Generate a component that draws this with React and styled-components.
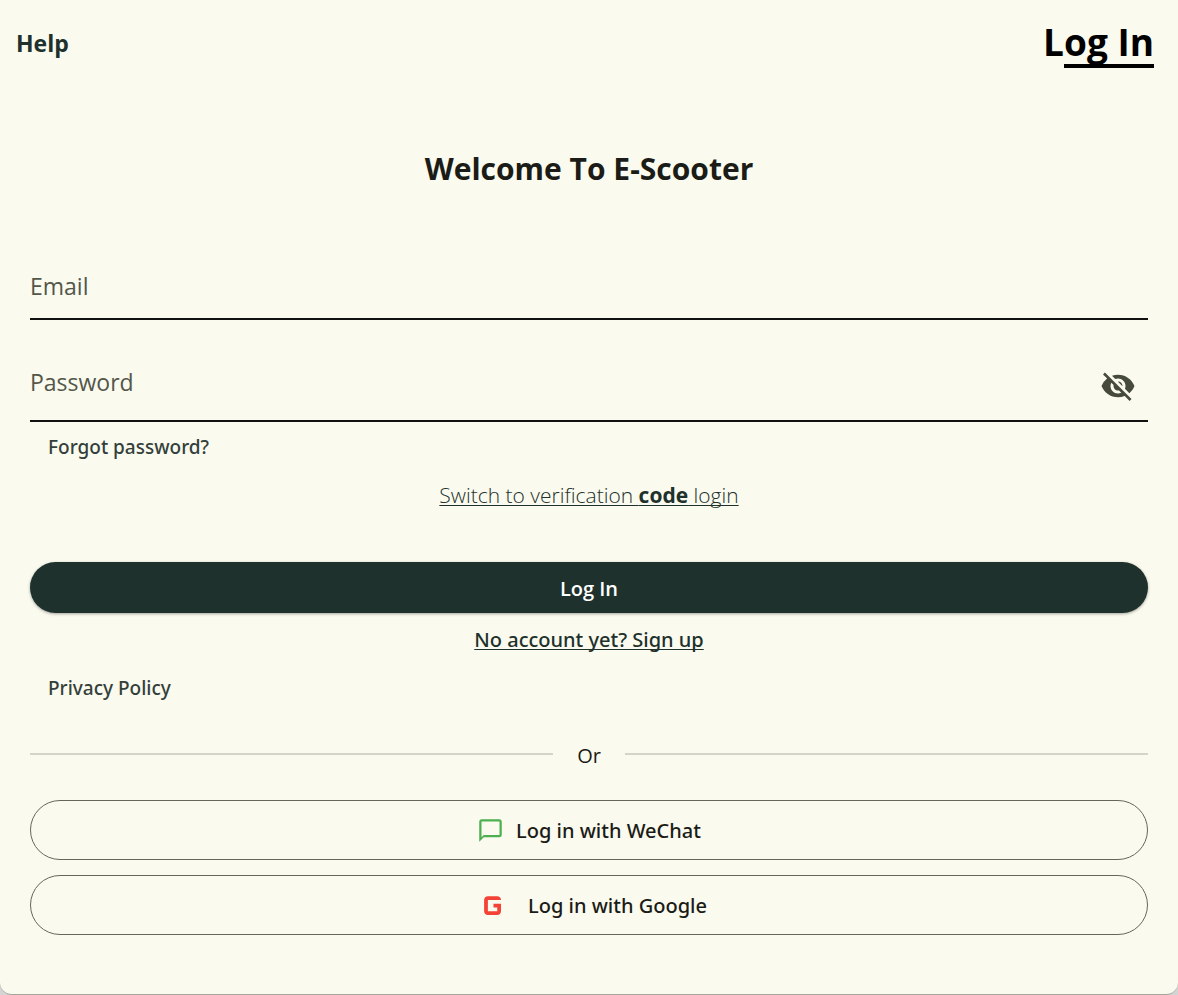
import React, { useState } from "react";
import styled, { createGlobalStyle } from "styled-components";
import {
  MdVisibility,
  MdVisibilityOff,
  MdChatBubbleOutline,
  MdGMobiledata,
} from "react-icons/md";

const mediumFont = `"Segoe UI", "Noto Sans", sans-serif`;

const GlobalStyle = createGlobalStyle`
  *, *::before, *::after { box-sizing: border-box; }
  body {
    margin: 0;
    background: #d4d4d4;
    font-family: "Segoe UI", "Open Sans", "Noto Sans", sans-serif;
    color: #1b1c17;
  }
  button, input { font: inherit; color: inherit; }
`;

const Page = styled.div`
  display: flex;
  flex-direction: column;
  min-height: 100vh;
  background: #fafaee;
  border-bottom: 1px solid #a5a5a0;
  border-radius: 0 0 12px 12px;
`;

const TopBar = styled.header`
  display: flex;
  align-items: center;
  justify-content: space-between;
  height: 84px;
  padding: 0 24px 0 16px;
`;

const HelpLink = styled.a`
  padding-top: 2px;
  font-size: 23px;
  line-height: 32px;
  font-weight: 700;
  color: #1e312c;
  text-decoration: none;
`;

const CurrentTab = styled.div`
  position: relative;
  font-size: 37px;
  line-height: 52px;
  font-weight: 700;
  color: #000;

  &::after {
    content: "";
    position: absolute;
    right: 0;
    bottom: 0;
    width: 90px;
    height: 4px;
    background: #000;
  }
`;

const Form = styled.form`
  display: flex;
  flex-direction: column;
  padding: 64px 30px 58px;
`;

const Title = styled.h1`
  margin: 0 0 70px;
  font-size: 30px;
  line-height: 42px;
  font-weight: 700;
  text-align: center;
`;

const Field = styled.div`
  display: flex;
  align-items: center;
  height: ${(p) => (p.$tall ? 102 : 60)}px;
  padding-top: ${(p) => (p.$tall ? 32 : 2)}px;
  border-bottom: 2px solid #111;
`;

const Input = styled.input`
  flex: 1;
  min-width: 0;
  height: 48px;
  padding: 0 0 8px;
  border: 0;
  outline: 0;
  background: none;
  font-size: 23px;

  &::placeholder {
    color: #53564a;
    opacity: 1;
  }
`;

const IconButton = styled.button`
  display: flex;
  padding: 0 12px;
  border: 0;
  background: none;
  color: #454a3b;
  cursor: pointer;
`;

const SideLink = styled.a`
  align-self: flex-start;
  padding: 0 18px;
  font-family: ${mediumFont};
  font-size: 19px;
  line-height: 50px;
  font-weight: 500;
  color: #343f3b;
  text-decoration: none;
`;

const CenterLink = styled.a`
  align-self: center;
  font-family: ${(p) => (p.$light ? "inherit" : mediumFont)};
  font-size: ${(p) => (p.$light ? 21 : 20)}px;
  line-height: 46px;
  font-weight: ${(p) => (p.$light ? 300 : 500)};
  color: #1e312c;
  text-underline-offset: 2px;
  text-decoration-thickness: 1px;
  text-decoration-skip-ink: none;

  b {
    font-weight: 700;
  }
`;

const PrimaryButton = styled.button`
  height: 51px;
  margin: 44px 0 4px;
  padding: 2px 0 0;
  border: 0;
  border-radius: 26px;
  background: #1e312c;
  box-shadow: 0 1px 3px rgba(0, 0, 0, 0.35);
  color: #fff;
  font-size: 20px;
  font-weight: 600;
  cursor: pointer;
`;

const Divider = styled.div`
  display: flex;
  align-items: center;
  gap: 24px;
  height: 44px;
  margin: 20px 0 23px;
  font-size: 20px;

  &::before,
  &::after {
    content: "";
    flex: 1;
    height: 2px;
    margin-bottom: 2px;
    background: #d3d5c8;
  }
`;

const SocialList = styled.div`
  display: flex;
  flex-direction: column;
  gap: 15px;
`;

const SocialButton = styled.button`
  display: flex;
  align-items: center;
  justify-content: center;
  gap: 12px;
  height: 60px;
  padding: 0;
  border: 1px solid #66675b;
  border-radius: 30px;
  background: none;
  font-family: ${mediumFont};
  font-size: 20px;
  font-weight: 500;
  cursor: pointer;

  svg {
    color: ${(p) => p.$accent};
  }
`;

export default function App() {
  const [visible, setVisible] = useState(false);
  return (
    <>
      <GlobalStyle />
      <Page>
        <TopBar>
          <HelpLink href="#help">Help</HelpLink>
          <CurrentTab>Log In</CurrentTab>
        </TopBar>
        <Form onSubmit={(e) => e.preventDefault()}>
          <Title>Welcome To E-Scooter</Title>
          <Field>
            <Input type="email" aria-label="Email" placeholder="Email" />
          </Field>
          <Field $tall>
            <Input
              type={visible ? "text" : "password"}
              aria-label="Password"
              placeholder="Password"
            />
            <IconButton
              type="button"
              aria-label="Toggle password visibility"
              onClick={() => setVisible(!visible)}
            >
              {visible ? <MdVisibility size={36} /> : <MdVisibilityOff size={36} />}
            </IconButton>
          </Field>
          <SideLink href="#forgot">Forgot password?</SideLink>
          <CenterLink href="#code" $light>
            Switch to verification <b>code</b> login
          </CenterLink>
          <PrimaryButton type="submit">Log In</PrimaryButton>
          <CenterLink href="#signup">No account yet? Sign up</CenterLink>
          <SideLink href="#privacy">Privacy Policy</SideLink>
          <Divider>Or</Divider>
          <SocialList>
            <SocialButton type="button" $accent="#4caf50">
              <MdChatBubbleOutline size={27} />
              Log in with WeChat
            </SocialButton>
            <SocialButton type="button" $accent="#f44336">
              <MdGMobiledata size={45} />
              Log in with Google
            </SocialButton>
          </SocialList>
        </Form>
      </Page>
    </>
  );
}
